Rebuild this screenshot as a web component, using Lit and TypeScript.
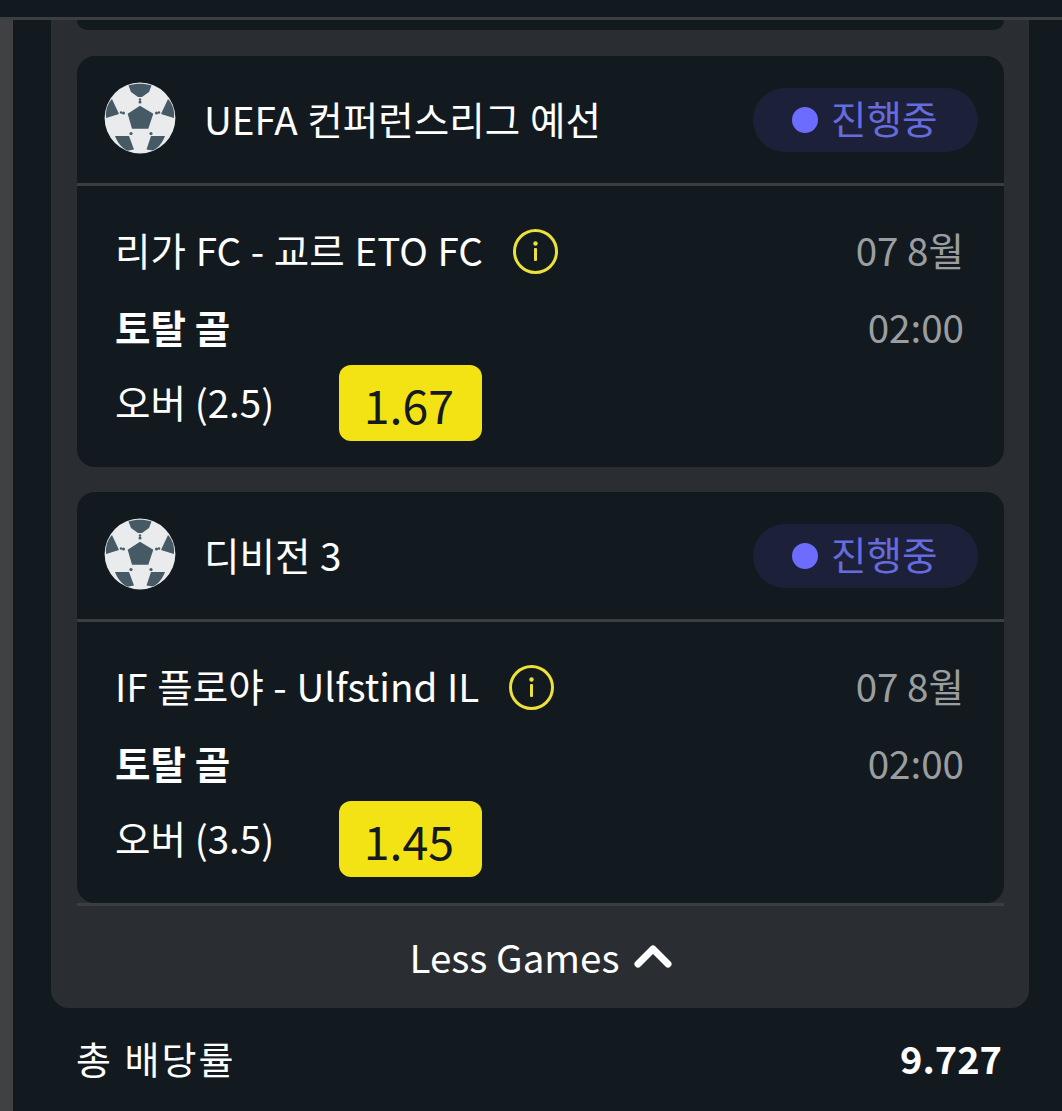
import { LitElement, html, css } from "lit";
import { customElement } from "lit/decorators.js";

interface Game {
  league: string;
  match: string;
  pick: string;
  odds: string;
}

const GAMES: Game[] = [
  { league: "UEFA 컨퍼런스리그 예선", match: "리가 FC - 교르 ETO FC", pick: "오버 (2.5)", odds: "1.67" },
  { league: "디비전 3", match: "IF 플로야 - Ulfstind IL", pick: "오버 (3.5)", odds: "1.45" },
];

const ball = html`<svg class="ball" viewBox="-36 -36 72 72" aria-hidden="true">
  <circle r="35.4" fill="#e9ebed"></circle>
  <g fill="#455a64">
    <path d="M0-12.3 13.3-4.3 8.3 10.7H-8L-12.3-4.3Z"></path>
    <path d="M-11.5-32.500C-4-35 4-35 11.5-32.500L9-26 2-21H-2L-9-26Z"></path>
    <path d="M-28-19-21-4-33.800 0C-35-6-33-14-28-19Z"></path>
    <path d="M28-19 21-4 33.800 0C35-6 33-14 28-19Z"></path>
    <path d="M-25 18H-11L-6 31.500-12.500 32.800C-18 30-22.500 25-25 18Z"></path>
    <path d="M25 18H11L6.500 31.500 12.800 32.600C18 30 22.500 25 25 18Z"></path>
    <circle cx="0" cy="-16" r="1.500"></circle>
    <circle cx="0" cy="-18.500" r="1.200"></circle>
    <circle cx="-16.500" cy="-5" r="1.500"></circle>
    <circle cx="-19" cy="-5.500" r="1.200"></circle>
    <circle cx="16.500" cy="-5" r="1.500"></circle>
    <circle cx="19" cy="-5.500" r="1.200"></circle>
    <circle cx="-9" cy="15.500" r="1.600"></circle>
    <circle cx="11" cy="15.500" r="1.600"></circle>
  </g>
</svg>`;

const info = html`<svg class="info" viewBox="0 0 45 45" aria-hidden="true">
  <circle cx="22.500" cy="22.500" r="21" fill="none" stroke="#ece03a" stroke-width="3"></circle>
  <circle cx="22.500" cy="14.500" r="2.200" fill="#ece03a"></circle>
  <rect x="21" y="19" width="3" height="13" rx="1" fill="#ece03a"></rect>
</svg>`;

@customElement("app-root")
export class AppRoot extends LitElement {
  static styles = css`
    :host {
      display: block;
      width: 1062px;
      height: 1111px;
      overflow: hidden;
      background: #131a1f;
      color: #fff;
      font-family: "Noto Sans CJK KR", "Noto Sans", sans-serif;
      font-size: 38.6px;
    }
    .top {
      height: 17px;
      border-bottom: 3px solid #3c3f42;
    }
    .page {
      border-left: 13px solid #404142;
      padding: 0 33px 0 38px;
    }
    .panel {
      background: #2a2d31;
      border-radius: 0 0 18px 18px;
      padding: 0 25px 0 26px;
    }
    .stub {
      height: 10px;
      background: #131a1f;
      border-radius: 0 0 16px 16px;
      margin-bottom: 26px;
    }
    .card {
      background: #131a1f;
      border-radius: 18px;
      margin-bottom: 25px;
    }
    .card:last-of-type {
      margin-bottom: 0;
    }
    .head {
      height: 127px;
      display: flex;
      align-items: center;
      padding: 0 26px 0 27px;
      border-bottom: 3px solid #3c3f42;
    }
    .ball {
      width: 72px;
      height: 72px;
      flex: none;
      margin-bottom: 3px;
    }
    .league {
      margin: 0 0 4px 28px;
      flex: 1;
      white-space: nowrap;
      line-height: 46px;
      word-spacing: 1px;
    }
    .pill {
      width: 225px;
      height: 64px;
      border-radius: 32px;
      background: #1c2139;
      color: #666bdd;
      display: flex;
      align-items: center;
      padding-left: 39px;
      box-sizing: border-box;
      gap: 13px;
    }
    .dot {
      width: 26px;
      height: 26px;
      border-radius: 50%;
      background: #6c6cff;
    }
    .body {
      padding: 42px 40px 26px 38px;
    }
    .row {
      display: flex;
      justify-content: space-between;
      align-items: center;
      height: 46px;
      line-height: 46px;
      white-space: nowrap;
    }
    .row + .row {
      margin-top: 31px;
    }
    .label {
      margin-bottom: 5px;
    }
    .match {
      display: flex;
      align-items: center;
      gap: 30px;
      word-spacing: 1px;
    }
    .info {
      width: 45px;
      height: 45px;
    }
    .muted {
      color: #9b9ea1;
      margin-bottom: 5px;
    }
    .market {
      font-weight: 700;
      margin-bottom: 5px;
    }
    .pick {
      display: flex;
      align-items: center;
      margin-top: 14px;
    }
    .pick-label {
      width: 224px;
      white-space: nowrap;
      margin-bottom: 4px;
    }
    .odds {
      width: 143px;
      height: 76px;
      box-sizing: border-box;
      padding-right: 3px;
      border-radius: 12px;
      background: #f3e314;
      color: #141a20;
      font-size: 46.5px;
      display: flex;
      align-items: center;
      justify-content: center;
    }
    .less {
      height: 105px;
      box-sizing: border-box;
      border-top: 3px solid #3c3f42;
      padding-bottom: 2px;
      display: flex;
      align-items: center;
      justify-content: center;
      gap: 14px;
    }
    .chev {
      width: 38px;
      height: 26px;
    }
    .foot {
      height: 103px;
      box-sizing: border-box;
      padding: 0 27px 4px 25px;
      display: flex;
      align-items: center;
      justify-content: space-between;
      font-size: 38px;
    }
    .foot-label {
      letter-spacing: 2px;
      word-spacing: 1px;
    }
    .total {
      font-weight: 700;
    }
  `;

  render() {
    return html`
      <div class="top"></div>
      <div class="page">
        <div class="panel">
          <div class="stub"></div>
          ${GAMES.map(
            (g) => html`
              <section class="card">
                <div class="head">
                  ${ball}
                  <span class="league">${g.league}</span>
                  <span class="pill"><span class="dot"></span><span class="label">진행중</span></span>
                </div>
                <div class="body">
                  <div class="row">
                    <span class="match"><span class="label">${g.match}</span>${info}</span>
                    <span class="muted">07 8월</span>
                  </div>
                  <div class="row">
                    <span class="market">토탈 골</span>
                    <span class="muted">02:00</span>
                  </div>
                  <div class="pick">
                    <span class="pick-label">${g.pick}</span>
                    <span class="odds">${g.odds}</span>
                  </div>
                </div>
              </section>
            `
          )}
          <div class="less">
            <span>Less Games</span>
            <svg class="chev" viewBox="0 0 38 26" aria-hidden="true">
              <path d="M4 21 19 6 34 21" fill="none" stroke="#fff" stroke-width="7" stroke-linecap="round" stroke-linejoin="round"></path>
            </svg>
          </div>
        </div>
        <div class="foot">
          <span class="foot-label">총 배당률</span>
          <span class="total">9.727</span>
        </div>
      </div>
    `;
  }
}
